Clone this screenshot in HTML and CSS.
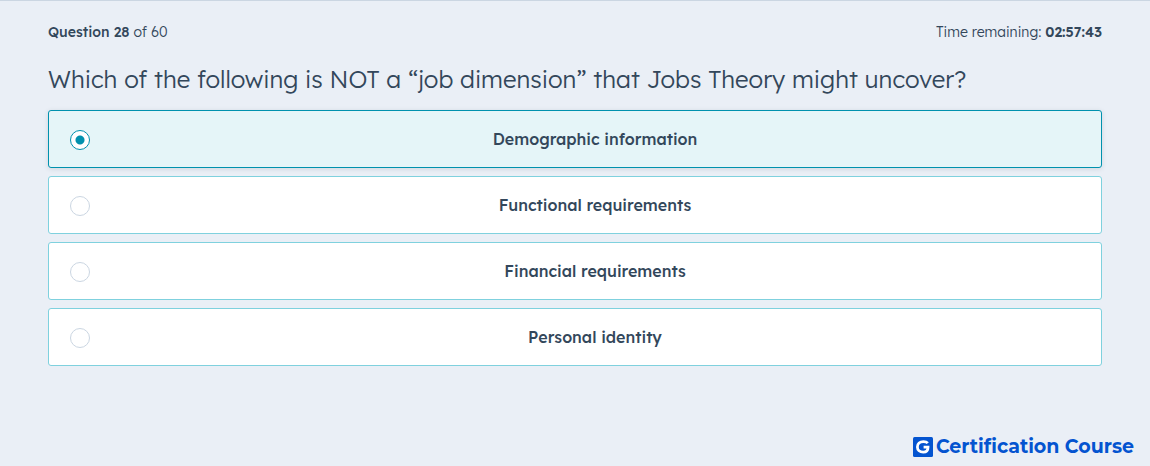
FILE: index.html
```html
<!DOCTYPE html>
<html lang="en">
<head>
    <meta charset="UTF-8">
    <meta name="viewport" content="width=device-width, initial-scale=1.0">
    <title>Certification Course</title>
    <link rel="stylesheet" href="styles.css">
</head>
<body>
    <main class="exam">
        <div class="status">
            <p><strong>Question 28</strong> of 60</p>
            <p class="timer">Time remaining: <strong>02:57:43</strong></p>
        </div>

        <form>
            <fieldset class="question">
                <legend>Which of the following is NOT a “job dimension” that Jobs Theory might uncover?</legend>
                <label class="answer">
                    <input type="radio" name="answer" value="1" checked>
                    <span>Demographic information</span>
                </label>
                <label class="answer">
                    <input type="radio" name="answer" value="2">
                    <span>Functional requirements</span>
                </label>
                <label class="answer">
                    <input type="radio" name="answer" value="3">
                    <span>Financial requirements</span>
                </label>
                <label class="answer">
                    <input type="radio" name="answer" value="4">
                    <span>Personal identity</span>
                </label>
            </fieldset>
        </form>
    </main>

    <!-- Brand -->
    <footer class="brand">
        <svg width="20" height="20" viewBox="0 0 20 20" aria-hidden="true">
            <rect width="20" height="20" rx="1.5" fill="#0454d0"/>
            <path d="M14.8 6.2C13.8 5 12.4 4.6 10.4 4.6C6.8 4.6 4.4 6.8 4.4 10S6.8 15.2 10.2 15.2C13.3 15.2 15 13.4 15 10.2H10.6" fill="none" stroke="#fff" stroke-width="2.8"/>
        </svg>
        <span>Certification Course</span>
    </footer>
</body>
</html>
```

FILE: styles.css
```css
* {
    box-sizing: border-box;
}

body {
    margin: 0;
    min-height: 100vh;
    display: flex;
    flex-direction: column;
    background-color: #eaeff6;
    border-top: 1px solid #cbd6e2;
    color: #33475b;
    font-family: "Lexend Deca", Lexend, Inter, sans-serif;
    font-weight: 300;
}

.exam {
    flex: 1;
    padding: 19px 48px;
}

/* Question counter and timer */
.status {
    display: flex;
    justify-content: space-between;
    font-size: 14px;
    line-height: 24px;
}

.status p {
    margin: 0;
}

.status strong {
    font-weight: 500;
}

.status .timer strong {
    font-weight: 600;
}

.question {
    display: flex;
    flex-direction: column;
    gap: 8px;
    margin: 0;
    padding: 0;
    border: 0;
}

.question legend {
    padding: 16px 0 12px;
    font-size: 24px;
    line-height: 38px;
}

/* Answers */
.answer {
    display: flex;
    align-items: center;
    height: 58px;
    padding: 0 1px 0 21px;
    background-color: #fff;
    border: 1px solid #7fd1de;
    border-radius: 3px;
    font-size: 16px;
    font-weight: 500;
    cursor: pointer;
}

.answer:has(input:checked) {
    background-color: #e5f5f8;
    border-color: #0091ae;
    box-shadow: 0 1px 5px rgba(45, 62, 80, 0.14);
}

.answer span {
    flex: 1;
    text-align: center;
}

.answer input {
    appearance: none;
    width: 20px;
    height: 20px;
    margin: 2px 0 0;
    background-color: #fff;
    border: 1px solid #cbd6e2;
    border-radius: 50%;
}

.answer input:checked {
    background-image: radial-gradient(circle, #0091ae 4px, transparent 5px);
    border-color: #0091ae;
}

.brand {
    display: flex;
    align-items: center;
    justify-content: flex-end;
    gap: 3px;
    padding: 0 16px 7px;
    color: #0454d0;
    font-family: Montserrat, Inter, sans-serif;
    font-size: 19px;
    font-weight: 700;
    line-height: 24px;
}
```
